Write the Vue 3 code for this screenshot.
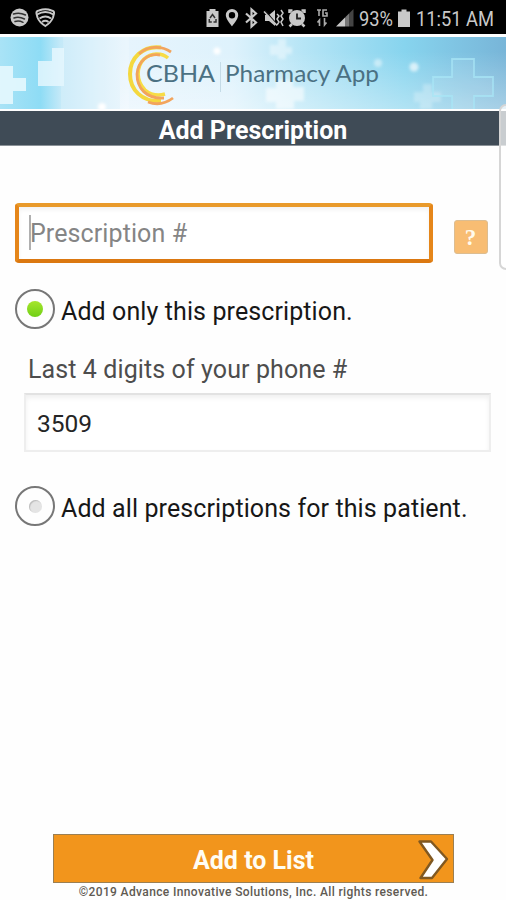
<script setup>
import { ref } from 'vue'

const prescription = ref('')
const phone = ref('3509')
const scope = ref('one')
</script>

<template>
  <main class="screen">
    <header class="status">
      <svg width="506" height="34" viewBox="0 0 506 34">
        <g fill="#c9c9c9">
          <circle cx="19.5" cy="17.5" r="9" />
          <path d="M13.5 14q6-2 12 1M14 18q5-1.700 10.500 1M15 21.500q4-1.300 8 .800" fill="none" stroke="#333" stroke-width="1.500" stroke-linecap="round" />
          <path d="M36.500 13.500Q36 11 39 10.500q6.500-2.500 12.500 0 3 .5 2.500 3l-1 4q-2 5-7.700 8.500-5.800-3.500-7.800-8.500z" fill="none" stroke="#c9c9c9" stroke-width="2" />
          <path d="M37 14.500q8.500-5 16.500 0M39.500 18.500q6-4 11.500 0M42 22q3.300-2.500 6.500 0" fill="none" stroke="#c9c9c9" stroke-width="2" />
          <path d="M206.500 11h3V9h6v2h3v16h-12z" />
          <path d="M210 18l2.500-3.500 2.500 3.500M209.300 19v3h2.500M213.500 22h2.500v-3" fill="none" stroke="#333" stroke-width="1.500" />
          <path fill-rule="evenodd" d="M232 9a6.200 6.200 0 0 0-6.200 6.200c0 4 6.200 11 6.200 11s6.200-7 6.200-11A6.200 6.200 0 0 0 232 9zm0 3a3.200 3.200 0 1 1 0 6.400 3.200 3.200 0 0 1 0-6.400z" />
          <path d="M246 13.500l10 9-4.500 4V9.500l4.500 4-10 9" fill="none" stroke="#c9c9c9" stroke-width="2.200" />
          <path d="M265 15h4l6-5v16l-6-5h-4z" />
          <path d="M265 10.500l12 14" stroke="#111" stroke-width="1.200" />
          <path d="M264 11.500l13 14M277 14l2 2-2 3 2 3-2 3M281 10l2 3-2 3 2 3-2 3 2 4" fill="none" stroke="#c9c9c9" stroke-width="1.500" />
          <circle cx="297" cy="18" r="8" />
          <path d="M289.500 13v-2.500h3M301.500 10.500h3V13M292 24l-2.500 2.500M302 24l2.500 2.500" fill="none" stroke="#c9c9c9" stroke-width="2.500" />
          <path d="M297 13.500V18.500h4" fill="none" stroke="#222" stroke-width="1.800" />
          <path d="M317 10h4M319 10v6M327 10h-4v6h4v-3h-2M319.500 26v-6l-2 2.500M324.500 18v7l2-2.500" fill="none" stroke="#aaa" stroke-width="1.600" />
          <path d="M336 26.500l9-9v9z" />
          <path d="M345 17.500l4-4v13h-4z" fill="#777" />
          <path d="M349 13.500l4.500-4.500v17.500H349z" fill="#444" />
          <path d="M398 11.500h3.500V9.500h5v2h3.500V27h-12z" />
        </g>
        <g class="status-text">
          <text x="359" y="26" textLength="34" lengthAdjust="spacingAndGlyphs">93%</text>
          <text x="416" y="26" textLength="78" lengthAdjust="spacingAndGlyphs">11:51 AM</text>
        </g>
      </svg>
    </header>

    <div class="banner">
      <svg width="506" height="72" viewBox="0 0 506 72">
        <defs>
          <linearGradient id="sky">
            <stop offset="0" stop-color="#a9e3f6" />
            <stop offset=".08" stop-color="#8edcf5" />
            <stop offset=".12" stop-color="#c4e9f8" />
            <stop offset=".25" stop-color="#e6f4fd" />
            <stop offset=".46" stop-color="#def2fc" />
            <stop offset=".6" stop-color="#b6e5f6" />
            <stop offset=".8" stop-color="#87d4ee" />
            <stop offset="1" stop-color="#78b5d8" />
          </linearGradient>
          <linearGradient id="glow" x1="0" y1="0" x2="0" y2="1">
            <stop offset=".2" stop-color="#fff" stop-opacity="0" />
            <stop offset="1" stop-color="#fff" stop-opacity=".35" />
          </linearGradient>
          <filter id="soft" x="-20%" y="-20%" width="140%" height="140%"><feGaussianBlur stdDeviation="1.800" /></filter>
          <filter id="slight"><feGaussianBlur stdDeviation=".7" /></filter>
        </defs>
        <rect width="506" height="72" fill="url(#sky)" />
        <rect x="120" width="386" height="72" fill="url(#glow)" />
        <g filter="url(#slight)">
          <path d="M-3 29h16v12h13v13H13v13H-3z" fill="#e5f8fe" opacity=".9" />
          <path d="M38 24h14V11h12v38H38z" fill="#e8f7fe" opacity=".8" />
        </g>
        <path d="M63 0h66v72H61V49h3z" fill="#fff" opacity=".18" />
        <g fill="#fff" filter="url(#soft)">
          <path d="M270 8h8V2h8v8h6v7h-6v5h-8v-4h-8z" opacity=".4" />
          <path d="M266 51h10v-8h17v7h11v14h-10v8h-18v-7h-10z" opacity=".55" />
          <path d="M414 55h9v-8h9v8h9v10h-9v7h-12v-7h-6z" opacity=".25" />
          <circle cx="217" cy="14" r="3.500" />
          <circle cx="378" cy="26" r="4" opacity=".45" />
          <circle cx="414" cy="30" r="4.500" opacity=".65" />
          <circle cx="102" cy="70" r="4" />
        </g>
        <path d="M452 72V59h-19V40h19V22h22v18h19v19h-19v13" fill="#fff" fill-opacity=".08" stroke="#a8e6f5" stroke-opacity=".75" stroke-width="1.800" />
        <g fill="none">
          <path d="M161 10.500C143 8 130 21 130 37s12 28 31 27" stroke="#f4d83e" stroke-width="4" />
          <path d="M168 21c-7-6-17-5-24 1-8 8-8 22 1 31 6 5 13 6 20 4" stroke="#f7dc45" stroke-width="3.500" />
          <path d="M171 15c-10-7-24-6-32 2M160 18c-13-2-22 7-23 19 0 14 9 25 27 24M173 61c-8 6-17 7-25 4" stroke="#f2a45c" stroke-width="2.800" />
        </g>
        <path d="M220.500 25v30" stroke="#c4dbe7" />
        <g class="brand">
          <text x="146" y="44.500" textLength="69" lengthAdjust="spacingAndGlyphs">CBHA</text>
          <text x="225" y="45" textLength="154" lengthAdjust="spacingAndGlyphs">Pharmacy App</text>
        </g>
      </svg>
    </div>

    <h1 class="title">Add Prescription</h1>

    <form class="form" @submit.prevent>
      <div class="number-row">
        <label class="number-box">
          <span class="caret"></span>
          <input v-model="prescription" class="number-input" placeholder="Prescription #" />
        </label>
        <button type="button" class="help">?</button>
      </div>

      <label class="choice first">
        <input v-model="scope" type="radio" value="one" class="native" />
        <span class="radio" :class="{ on: scope === 'one' }"></span>
        <span class="choice-text">Add only this prescription.</span>
      </label>

      <label class="phone-label" for="phone">Last 4 digits of your phone #</label>
      <input id="phone" v-model="phone" class="phone-input" />

      <label class="choice second">
        <input v-model="scope" type="radio" value="all" class="native" />
        <span class="radio" :class="{ on: scope === 'all' }"></span>
        <span class="choice-text">Add all prescriptions for this patient.</span>
      </label>
    </form>

    <footer class="footer">
      <button class="submit">
        <span>Add to List</span>
        <svg class="chevron" width="36" height="46" viewBox="0 0 36 46">
          <path d="M2.500 5.500H14L30 23 15 42H3.500L15.500 24z" fill="#fff" stroke="#805821" stroke-width="2.400" stroke-linejoin="round" />
        </svg>
      </button>
      <small class="copyright">©2019 Advance Innovative Solutions, Inc. All rights reserved.</small>
    </footer>

    <div class="edge-handle"></div>
  </main>
</template>

<style>
body { margin: 0; background: #fefefe; }
</style>

<style scoped>
* { box-sizing: border-box; }
.screen {
  position: relative;
  display: flex;
  flex-direction: column;
  width: 506px;
  height: 900px;
  overflow: hidden;
  background: #fefefe;
  font-family: Roboto, "Liberation Sans", sans-serif;
}
svg { display: block; }
.status { height: 34px; background: #000; flex: none; }
.status-text { font: 20.5px Roboto, sans-serif; fill: #c9c9c9; }
.banner { height: 77px; padding: 3px 0 2px; flex: none; }
.brand { font: 23px Lato, sans-serif; fill: #4b7183; }
.title {
  flex: none;
  height: 35px;
  margin: 0;
  background: #3f4b56;
  border-bottom: 1px solid #8b9298;
  color: #fff;
  font-size: 25px;
  font-weight: 700;
  line-height: 39px;
  text-align: center;
}
.form { display: flex; flex-direction: column; flex: 1; padding-top: 57px; }
.number-row { display: flex; align-items: flex-start; gap: 21px; height: 60px; padding-left: 14.500px; }
.number-box {
  display: flex;
  align-items: center;
  width: 418px;
  height: 60px;
  padding-left: 10.500px;
  border: 4px solid;
  border-color: #e99a2b #e5861a #db7811;
  border-radius: 4px;
  background: #fff;
  box-shadow: inset 0 3px 4px #f3f3f3;
}
.caret { width: 2px; height: 35px; margin-top: -2px; background: #b0b0b0; flex: none; }
input { font-family: inherit; outline: none; }
.number-input {
  flex: 1;
  min-width: 0;
  height: 48px;
  padding: 1px 0 0;
  margin-left: -1px;
  border: 0;
  background: none;
  font-size: 25px;
  letter-spacing: .1px;
}
.number-input::placeholder { color: #858585; opacity: 1; }
.help {
  width: 34px;
  height: 34px;
  margin-top: 17px;
  padding: 2px 0 0;
  border: 1px solid #dcbd91;
  border-radius: 3px;
  background: #f8bd73;
  color: #fffbed;
  font: 700 23px/28px "Liberation Serif", serif;
}
.choice { display: flex; align-items: center; height: 40px; padding-left: 15px; gap: 6px; }
.first { margin-top: 26px; }
.second { margin-top: 34px; }
.native { position: absolute; opacity: 0; }
.radio {
  display: flex;
  align-items: center;
  justify-content: center;
  width: 40px;
  height: 40px;
  border: 2px solid #777;
  border-radius: 50%;
}
.radio::after {
  content: "";
  width: 13px;
  height: 13px;
  border-radius: 50%;
  background: #e4e4e4;
  box-shadow: inset 1px 1px 1px #bbb;
}
.radio.on::after {
  width: 16px;
  height: 16px;
  background: linear-gradient(#a6e62d, #70cf16);
  box-shadow: none;
}
.choice-text { padding-top: 6px; color: #171717; font-size: 25px; line-height: 30px; white-space: nowrap; letter-spacing: .1px; }
.phone-label { margin: 26px 0 0 28px; height: 38px; color: #4d4d4d; font-size: 25px; line-height: 30px; letter-spacing: .1px; }
.phone-input {
  width: 467px;
  height: 59px;
  margin-left: 24px;
  padding: 2px 12px 0 11px;
  border: 2px solid #eee;
  border-top-color: #e2e2e2;
  background: #fff;
  box-shadow: inset 0 3px 5px #f0f0f0;
  color: #252525;
  font-size: 24.5px;
}
.footer { height: 66px; flex: none; display: flex; flex-direction: column; align-items: center; padding-left: 1px; }
.submit {
  flex: none;
  display: flex;
  align-items: center;
  justify-content: center;
  position: relative;
  width: 401px;
  height: 49px;
  padding: 3px 0 0;
  border: 1px solid #9b7f52;
  background: #f2951c;
  color: #fffdf4;
  font: 700 25px Roboto, sans-serif;
}
.chevron { position: absolute; right: 0; top: 1px; }
.copyright { flex: none; color: #605a52; font-size: 12px; font-weight: 500; line-height: 19px; white-space: nowrap; letter-spacing: .37px; }
.edge-handle {
  position: absolute;
  right: -8px;
  top: 104px;
  width: 15px;
  height: 166px;
  border: 2px solid #d6d6d6;
  border-radius: 7px;
  background: #ffffffb8;
}
</style>
